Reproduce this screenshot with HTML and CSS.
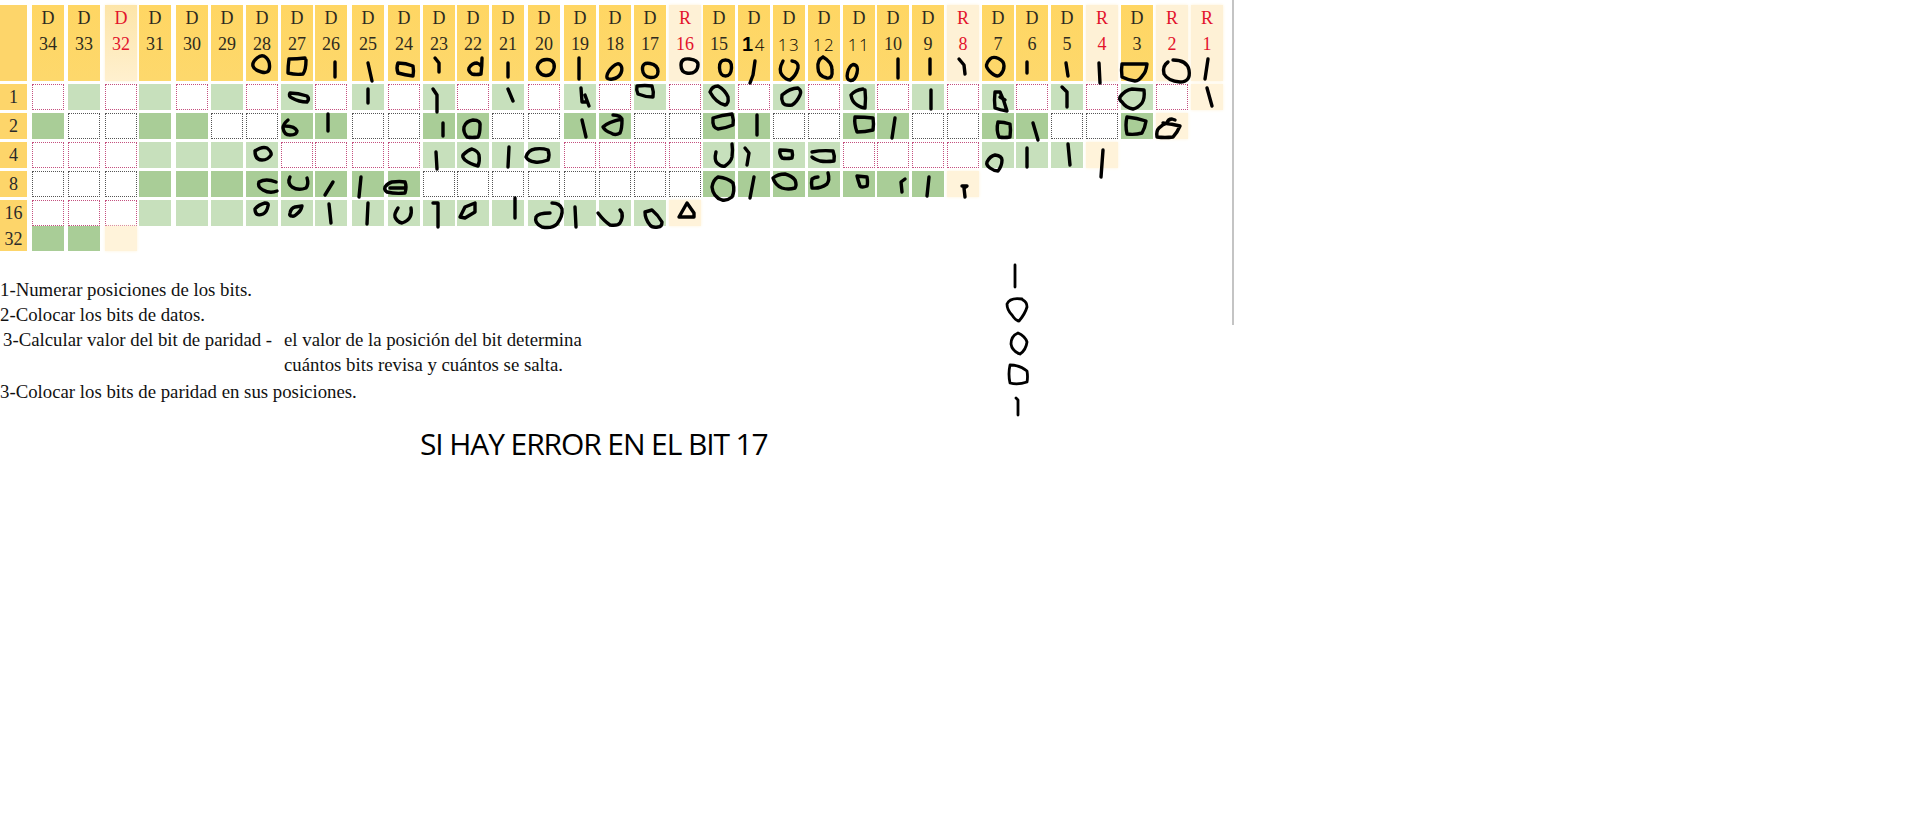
FILE: index.html
```html
<!DOCTYPE html>
<html lang="es">
<head>
  <meta charset="UTF-8">
  <title>Bits de paridad</title>
  <link rel="stylesheet" href="styles.css">
</head>
<body>
  <div class="sheet">
    <div class="bit-grid">
      <div class="row-label"></div>
      <div class="col-head"><span>D</span><span>34</span></div>
      <div class="col-head"><span>D</span><span>33</span></div>
      <div class="col-head parity data-red"><span>D</span><span>32</span></div>
      <div class="col-head"><span>D</span><span>31</span></div>
      <div class="col-head"><span>D</span><span>30</span></div>
      <div class="col-head"><span>D</span><span>29</span></div>
      <div class="col-head"><span>D</span><span>28</span></div>
      <div class="col-head"><span>D</span><span>27</span></div>
      <div class="col-head"><span>D</span><span>26</span></div>
      <div class="col-head"><span>D</span><span>25</span></div>
      <div class="col-head"><span>D</span><span>24</span></div>
      <div class="col-head"><span>D</span><span>23</span></div>
      <div class="col-head"><span>D</span><span>22</span></div>
      <div class="col-head"><span>D</span><span>21</span></div>
      <div class="col-head"><span>D</span><span>20</span></div>
      <div class="col-head"><span>D</span><span>19</span></div>
      <div class="col-head"><span>D</span><span>18</span></div>
      <div class="col-head"><span>D</span><span>17</span></div>
      <div class="col-head parity"><span>R</span><span>16</span></div>
      <div class="col-head"><span>D</span><span>15</span></div>
      <div class="col-head"><span>D</span><span class="pen"><b>1</b>4</span></div>
      <div class="col-head"><span>D</span><span class="pen">13</span></div>
      <div class="col-head"><span>D</span><span class="pen">12</span></div>
      <div class="col-head"><span>D</span><span class="pen">11</span></div>
      <div class="col-head"><span>D</span><span>10</span></div>
      <div class="col-head"><span>D</span><span>9</span></div>
      <div class="col-head parity"><span>R</span><span>8</span></div>
      <div class="col-head"><span>D</span><span>7</span></div>
      <div class="col-head"><span>D</span><span>6</span></div>
      <div class="col-head"><span>D</span><span>5</span></div>
      <div class="col-head parity"><span>R</span><span>4</span></div>
      <div class="col-head"><span>D</span><span>3</span></div>
      <div class="col-head parity"><span>R</span><span>2</span></div>
      <div class="col-head parity"><span>R</span><span>1</span></div>

      <div class="row-label">1</div>
      <i class="dot"></i><i class="soft"></i><i class="dot"></i><i class="soft"></i><i class="dot"></i><i class="soft"></i><i class="dot"></i><i class="soft"></i><i class="dot"></i><i class="soft"></i><i class="dot"></i>
      <i class="soft"></i><i class="dot"></i><i class="soft"></i><i class="dot"></i><i class="soft"></i><i class="dot"></i><i class="soft"></i><i class="dot"></i><i class="soft"></i><i class="dot"></i><i class="soft"></i><i class="dot"></i>
      <i class="soft"></i><i class="dot"></i><i class="soft"></i><i class="dot"></i><i class="soft"></i><i class="dot"></i><i class="soft"></i><i class="dot"></i><i class="soft"></i><i class="dot"></i><i class="pale"></i>

      <div class="row-label">2</div>
      <i class="deep"></i><i class="dot gray"></i><i class="dot gray"></i><i class="deep"></i><i class="deep"></i><i class="dot gray"></i><i class="dot gray"></i><i class="deep"></i><i class="deep"></i><i class="dot gray"></i><i class="dot gray"></i>
      <i class="deep"></i><i class="deep"></i><i class="dot gray"></i><i class="dot gray"></i><i class="deep"></i><i class="deep"></i><i class="dot gray"></i><i class="dot gray"></i><i class="deep"></i><i class="deep"></i><i class="dot gray"></i><i class="dot gray"></i>
      <i class="deep"></i><i class="deep"></i><i class="dot gray"></i><i class="dot gray"></i><i class="deep"></i><i class="deep"></i><i class="dot gray"></i><i class="dot gray"></i><i class="deep"></i><i class="pale"></i><i></i>

      <div class="row-label">4</div>
      <i class="dot"></i><i class="dot"></i><i class="dot"></i><i class="soft"></i><i class="soft"></i><i class="soft"></i><i class="soft"></i><i class="dot"></i><i class="dot"></i><i class="dot"></i><i class="dot"></i>
      <i class="soft"></i><i class="soft"></i><i class="soft"></i><i class="soft"></i><i class="dot"></i><i class="dot"></i><i class="dot"></i><i class="dot"></i><i class="soft"></i><i class="soft"></i><i class="soft"></i><i class="soft"></i>
      <i class="dot"></i><i class="dot"></i><i class="dot"></i><i class="dot"></i><i class="soft"></i><i class="soft"></i><i class="soft"></i><i class="pale"></i><i></i><i></i><i></i>

      <div class="row-label">8</div>
      <i class="dot gray"></i><i class="dot gray"></i><i class="dot gray"></i><i class="deep"></i><i class="deep"></i><i class="deep"></i><i class="deep"></i><i class="deep"></i><i class="deep"></i><i class="deep"></i><i class="deep"></i>
      <i class="dot gray"></i><i class="dot gray"></i><i class="dot gray"></i><i class="dot gray"></i><i class="dot gray"></i><i class="dot gray"></i><i class="dot gray"></i><i class="dot gray"></i><i class="deep"></i><i class="deep"></i><i class="deep"></i><i class="deep"></i>
      <i class="deep"></i><i class="deep"></i><i class="deep"></i><i class="pale"></i><i></i><i></i><i></i><i></i><i></i><i></i><i></i>

      <div class="row-label">16</div>
      <i class="dot"></i><i class="dot"></i><i class="dot"></i><i class="soft"></i><i class="soft"></i><i class="soft"></i><i class="soft"></i><i class="soft"></i><i class="soft"></i><i class="soft"></i><i class="soft"></i>
      <i class="soft"></i><i class="soft"></i><i class="soft"></i><i class="soft"></i><i class="soft"></i><i class="soft"></i><i class="soft"></i><i class="pale"></i><i></i><i></i><i></i><i></i>
      <i></i><i></i><i></i><i></i><i></i><i></i><i></i><i></i><i></i><i></i><i></i>

      <div class="row-label last">32</div>
      <i class="deep last"></i><i class="deep last"></i><i class="pale last"></i>
    </div>

    <div class="notes">
      <p>1-Numerar posiciones de los bits.</p>
      <p>2-Colocar los bits de datos.</p>
      <div class="note-split">
        <p class="note-left">3-Calcular valor del bit de paridad -</p>
        <p>el valor de la posición del bit determina<br>cuántos bits revisa y cuántos se salta.</p>
      </div>
      <p class="note-end">3-Colocar los bits de paridad en sus posiciones.</p>
    </div>

    <h2 class="error-line">SI HAY ERROR EN EL BIT 17</h2>

    <!-- marcas a mano encima de la tabla -->
    <svg class="ink" width="1910" height="825" viewBox="0 0 1910 825">
      <g>
        <path d="M266 57.5Q262 54 257 58Q252 62 253 66Q254 70 261.5 72Q269 74 269.5 67.5Q270 61 266 57.5Z"/>
        <path d="M305 58Q297 59 289 59Q288 66 288 73Q296 75 303 74Q306 70 306 60"/>
        <path d="M335 62V77"/>
        <path d="M368 63L372 81"/>
        <path d="M398 63Q406 63 413 66Q414 71 413 76Q405 75 398 73Q396 68 398 63Z"/>
        <path d="M435 58L439 63V72"/>
        <path d="M482 58Q482 66 481 74Q476 75 472 74Q468 71 469 68Q472 63 477 63Q480 64 481 66"/>
        <path d="M508 63V77"/>
        <path d="M547.5 59.5Q553 60 554 64Q555 68 552.5 72Q550 76 545.5 75.5Q541 75 538.5 71Q536 67 539 63Q542 59 547.5 59.5Z"/>
        <path d="M579 58V79"/>
        <path d="M613 66.5Q618 62 620.5 65Q623 68 621 73Q619 78 612.5 79Q606 80 607 75.5Q608 71 613 66.5Z"/>
        <path d="M642.5 69.5Q642 62 650 63.5Q658 65 658 71.5Q658 78 650.5 77.5Q643 77 642.5 69.5Z"/>
        <path d="M681 65Q681 58 689.5 59Q698 60 698 64.5Q698 69 695 71.5Q692 74 686.5 73Q681 72 681 65Z"/>
        <path d="M719.5 68Q719 60 725.5 60Q732 60 731.5 68Q731 76 725.5 76Q720 76 719.5 68Z"/>
        <path d="M755 61L753 75L750 83"/>
        <path d="M783 61Q778 70 782 75Q786 80 790 80Q796 76 798 68Q799 62 792 61"/>
        <path d="M823 57Q832 62 832 70Q833 79 827 78Q818 76 818 68Q817 60 823 57"/>
        <path d="M853 64.5Q849 66 847.5 73Q846 80 850.5 80.5Q855 81 857 73Q859 65 853 64.5Z"/>
        <path d="M898 59V78"/>
        <path d="M930 59V74"/>
        <path d="M959 59L964 65L965 74"/>
        <path d="M986.5 65Q987 62 990 59Q993 56 998.5 58.5Q1004 61 1004 66Q1004 71 1000.5 74.5Q997 78 991.5 73Q986 68 986.5 65Z"/>
        <path d="M1027 62V73"/>
        <path d="M1066 63L1068 76"/>
        <path d="M1099 63L1100 83"/>
        <path d="M1122 64L1147 64Q1146 72 1143 75Q1139 81 1135 81Q1128 80 1122 77Q1121 70 1122 64Z"/>
        <path d="M1173 60Q1187 60 1189 70Q1191 82 1180 82Q1168 81 1164 74Q1162 66 1168 62"/>
        <path d="M1208 59L1205 79"/>
      </g>
      <g>
        <path d="M290 93Q298 93 307 96Q310 99 307 102Q299 102 292 98Q288 96 290 93Z"/>
        <path d="M368 89V103"/>
        <path d="M433 89L437 95V112"/>
        <path d="M508 89L513 101"/>
        <path d="M581 88L582 102H586M585 95L589 106"/>
        <path d="M637 86Q645 85 652 86Q654 92 653 97Q645 97 638 94Q636 90 637 86Z"/>
        <path d="M710 92Q712 86 718 86Q725 90 728 97Q729 104 725 105Q716 103 710 92Z"/>
        <path d="M782 95Q790 88 798 88Q802 91 800 95Q797 102 792 105Q785 106 783 103Q781 99 782 95Z"/>
        <path d="M863 89Q855 90 851 95Q852 102 857 105Q862 108 865 108Q866 98 865 90"/>
        <path d="M931 90V109"/>
        <path d="M995 92H1000Q1004 100 1007 111Q1000 110 995 108Q994 100 995 92ZM1000 97L1005 100"/>
        <path d="M1062 87L1067 92V107"/>
        <path d="M1120 97Q1125 90 1132 89L1144 90Q1145 98 1142 103Q1138 108 1133 109Q1126 108 1122 102Q1119 100 1120 97Z"/>
        <path d="M1207 88L1212 106"/>
      </g>
      <g>
        <path d="M288 120Q283 124 283 128Q284 135 290 135Q297 135 297 131Q295 126 285 126"/>
        <path d="M328 114V131"/>
        <path d="M443 123V136"/>
        <path d="M473 120Q481 120 480 126Q480 134 478 137Q472 138 467 137Q463 132 464 127Q466 121 473 120Z"/>
        <path d="M582 120L586 137"/>
        <path d="M613 115Q621 115 622 120Q622 129 620 133Q615 136 611 133Q605 131 603 127Q608 122 622 119"/>
        <path d="M713 118Q722 115 732 114Q734 120 733 125Q726 128 718 129Q712 128 713 118Z"/>
        <path d="M757 115V135"/>
        <path d="M855 117Q865 117 873 118Q874 124 873 130Q865 132 857 132Q854 124 855 117Z"/>
        <path d="M895 118L892 138"/>
        <path d="M998 122Q1004 122 1010 124Q1011 130 1010 137Q1004 138 999 137Q996 130 998 122Z"/>
        <path d="M1033 123L1038 140"/>
        <path d="M1127 117Q1137 118 1146 121Q1145 128 1142 133Q1135 135 1127 134Q1125 125 1127 117Z"/>
        <path d="M1163 123Q1172 124 1180 126Q1177 133 1173 137Q1165 138 1157 137Q1156 131 1159 128Q1163 124 1167 123Q1168 119 1172 119L1175 120"/>
      </g>
      <g>
        <path d="M255 151Q262 146 267 148Q272 152 271 155Q268 160 262 160Q255 160 255 151Z"/>
        <path d="M436 152L437 169"/>
        <path d="M463 155Q468 150 472 149Q478 151 479 155Q480 161 478 166Q470 164 465 160Q462 157 463 155Z"/>
        <path d="M509 147L508 167"/>
        <path d="M526 157Q528 150 535 149Q542 148 548 150Q550 155 548 160Q540 163 535 162Q528 161 526 157Z"/>
        <path d="M716 152Q714 160 717 163Q721 167 725 166Q731 162 732 157Q733 150 732 144"/>
        <path d="M745 148L749 153L747 165"/>
        <path d="M780 150Q786 150 792 151Q793 155 792 158Q786 159 782 158Q779 154 780 150Z"/>
        <path d="M812 152Q822 150 833 151Q835 156 834 161Q826 162 820 161Q814 159 812 157"/>
        <path d="M987 162Q990 156 995 155Q1002 156 1002 160Q1002 166 998 171Q994 171 990 168Q986 165 987 162Z"/>
        <path d="M1027 148V167"/>
        <path d="M1068 144L1070 165"/>
        <path d="M1103 150L1101 177"/>
      </g>
      <g>
        <path d="M276 182Q266 178 259 182Q257 187 263 190Q270 194 277 191"/>
        <path d="M290 177Q287 183 292 187Q298 191 306 188Q309 184 307 178"/>
        <path d="M333 182L325 195"/>
        <path d="M361 177L359 197"/>
        <path d="M385 187Q388 183 392 182Q400 181 405 182Q407 187 405 193Q395 194 387 192Q384 190 385 187ZM390 188H404"/>
        <path d="M712 187Q713 180 718 177Q728 178 733 183Q735 191 732 197Q727 201 722 200Q713 197 712 187Z"/>
        <path d="M754 177L750 198"/>
        <path d="M773 178Q778 174 785 174Q792 176 795 180Q797 185 795 188Q788 190 782 188Q775 185 773 178Z"/>
        <path d="M828 173Q830 180 827 184Q820 189 812 188Q811 183 812 179Q815 177 818 177"/>
        <path d="M857 176L867 177Q868 183 867 186Q862 188 860 186Q858 180 857 176Z"/>
        <path d="M905 179L901 182L902 192"/>
        <path d="M929 177L927 196"/>
        <path d="M962 186H967L964 188L965 197"/>
      </g>
      <g>
        <path d="M255 209Q258 205 265 203Q269 203 268 206Q267 212 263 214Q255 217 255 209Z"/>
        <path d="M290 213Q291 208 295 207L302 206Q301 211 298 213Q294 217 292 216Q289 216 290 213Z"/>
        <path d="M329 204L331 223"/>
        <path d="M368 203L367 224"/>
        <path d="M398 208Q394 214 395 217Q397 222 402 223Q408 221 410 217Q412 213 411 208"/>
        <path d="M433 203H438V227"/>
        <path d="M460 217L465 207L475 203V212L465 218Z"/>
        <path d="M515 198V218"/>
        <path d="M550 213Q538 213 536 217Q534 223 542 227Q552 229 557 224Q563 216 562 209Q560 203 552 203"/>
        <path d="M575 207L576 227"/>
        <path d="M598 213Q604 221 610 225Q618 226 620 223Q623 218 622 213L620 210"/>
        <path d="M645 212L652 210Q658 215 662 222Q662 227 658 227Q652 228 650 225Q645 219 645 212Z"/>
        <path d="M687 203L694 213V217H679Z"/>
      </g>
      <g class="ink-side">
        <path d="M1015 265V287"/>
        <path d="M1022 299Q1010 297 1007 304Q1007 310 1012 315Q1016 321 1019 321Q1025 314 1027 307Q1027 302 1023 300"/>
        <path d="M1018 333Q1025 336 1027 342Q1026 350 1020 354Q1012 351 1011 344Q1011 336 1018 333Z"/>
        <path d="M1010 365Q1020 365 1027 371Q1028 377 1027 382Q1018 385 1010 383Q1008 374 1010 365Z"/>
        <path d="M1016 398L1018 400V415"/>
      </g>
    </svg>
  </div>
</body>
</html>
```

FILE: styles.css
```css
* {
  box-sizing: border-box;
}
body {
  margin: 0;
  background: #fff;
  font-family: "Liberation Serif", serif;
  color: #111;
}
.sheet {
  position: relative;
  width: 1910px;
  height: 825px;
  overflow: hidden;
}
/* the thin grey edge of the pasted picture */
.sheet::after {
  content: "";
  position: absolute;
  left: 1232px;
  top: 0;
  width: 2px;
  height: 325px;
  background: #c4c4c4;
}
.bit-grid {
  display: grid;
  /* the columns of the scanned table are not quite even */
  grid-template-columns: 29px 33px 34px 31px 34px 32px 32px 32px 31px 34px 33px 32px 31px 32px 33px 33px 32px 32px 32px 31px 32px 32px 32px 32px 31px 32px 32px 32px 31px 32px 32px 32px 32px 32px 32px;
  grid-template-rows: 76px 26px 26px 26px 26px 26px 22px;
  gap: 3px;
  padding-top: 5px;
}
.bit-grid i,
.col-head {
  display: block;
  width: 32px;
}
.row-label {
  margin-right: 2px;
  background: #fdd56a;
  font-size: 18px;
  line-height: 27px;
  text-align: center;
  color: #2a2a2a;
}
.col-head {
  display: flex;
  flex-direction: column;
  align-items: center;
  padding-top: 1px;
  background: linear-gradient(#ffd663, #fdd86c);
  font-size: 18px;
  line-height: 25.5px;
  color: #2d2a20;
}
.col-head.parity {
  background: #fef1d6;
  box-shadow: 0 0 3px #fef1d6;
  color: #e3132c;
}
.col-head.data-red {
  background: linear-gradient(#fde5a8, #fff0cf);
}
.pen {
  font-family: "Open Sans", sans-serif;
  font-weight: 300;
  font-size: 17px;
  letter-spacing: 1.5px;
  color: #000;
}
.pen b {
  font-family: "Liberation Sans", sans-serif;
  font-weight: 700;
  font-size: 20px;
  color: #000;
}
.soft {
  background: #c7e0bc;
}
.deep {
  background: #a9cd97;
}
.pale {
  background: #fff3da;
  box-shadow: 0 0 3px #fff3da;
}
.dot {
  border: 1px dotted #c4507f;
}
.dot.gray {
  border-color: #555;
}
.last {
  margin-top: -3px;
}
.notes {
  margin-top: 26px;
  font-size: 18.8px;
  line-height: 25px;
  color: #111;
}
.notes p {
  margin: 0;
}
.note-split {
  display: flex;
}
.note-left {
  width: 284px;
  padding-left: 3px;
}
.notes .note-end {
  margin-top: 2px;
}
.error-line {
  margin: 22px 0 0 420px;
  font-family: "Open Sans", sans-serif;
  font-size: 30px;
  font-weight: 400;
  letter-spacing: -1.1px;
  line-height: 36px;
  color: #000;
}
.ink {
  position: absolute;
  left: 0;
  top: 0;
  fill: none;
  stroke: #000;
  stroke-width: 3.4;
  stroke-linejoin: round;
  stroke-linecap: round;
}
.ink-side {
  stroke-width: 2.8;
}
```
